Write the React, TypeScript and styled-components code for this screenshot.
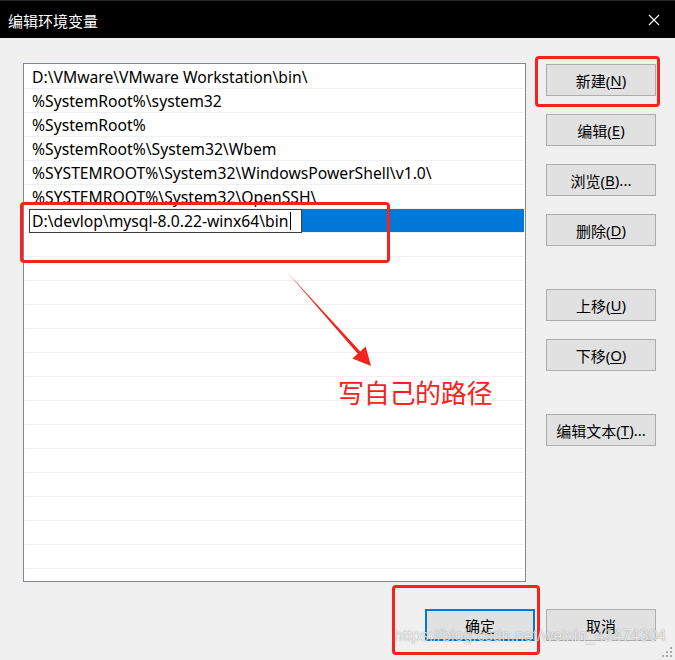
import styled, { createGlobalStyle } from "styled-components";

const GlobalStyle = createGlobalStyle`
  html, body {
    margin: 0;
    padding: 0;
    background: #f0f0f0;
  }
  * {
    box-sizing: border-box;
  }
`;

const UI_FONT = `"Noto Sans", "Noto Sans CJK SC", sans-serif`;
const RED = "#f5231c";

const Window = styled.div`
  position: relative;
  width: 675px;
  height: 660px;
  overflow: hidden;
  background: #f0f0f0;
  font-family: ${UI_FONT};
  font-size: 15px;
  color: #000;
`;

const TitleBar = styled.div`
  height: 38px;
  background: #000;
  border-top: 1px solid #262626;
  display: flex;
  align-items: center;
  justify-content: space-between;
  padding-left: 8px;
`;

const Title = styled.span`
  color: #fff;
  font-family: "Noto Sans CJK SC", sans-serif;
  font-size: 15px;
  line-height: 1;
  margin-top: 1px;
`;

const CloseButton = styled.div`
  width: 42px;
  height: 37px;
  display: flex;
  align-items: center;
  justify-content: center;
`;

const Body = styled.div`
  display: grid;
  grid-template-columns: 503px 110px;
  column-gap: 20px;
  padding: 25px 19px 0 23px;
`;

const List = styled.div`
  height: 519px;
  border: 1px solid #828790;
  background: #fff;
  padding: 1px 1px 0 1px;
  overflow: hidden;
  font-size: 15.7px;
`;

const Row = styled.div<{ $editing?: boolean }>`
  height: 24px;
  border-bottom: 1px solid #f0f0f0;
  display: flex;
  align-items: center;
  padding-left: ${(p) => (p.$editing ? "4px" : "7px")};
  white-space: nowrap;
  background: ${(p) =>
    p.$editing ? "linear-gradient(to right, #fff 4px, #0078d7 4px)" : "#fff"};
`;

const EditBox = styled.div`
  width: 273px;
  height: 24px;
  margin-bottom: -1px;
  border: 1px solid #3c3c3c;
  background: #fff;
  display: flex;
  align-items: center;
  padding-left: 2px;
`;

const Caret = styled.span`
  display: inline-block;
  width: 1px;
  height: 18px;
  background: #000;
  margin-left: 1px;
`;

const ButtonColumn = styled.div`
  display: flex;
  flex-direction: column;
  gap: 18px;
  padding-top: 1px;
`;

const Button = styled.div<{ $default?: boolean; $spaced?: boolean }>`
  width: 110px;
  height: 32px;
  background: #e1e1e1;
  border: ${(p) => (p.$default ? "2px solid #0078d7" : "1px solid #adadad")};
  display: flex;
  align-items: center;
  justify-content: center;
  font-family: ${UI_FONT};
  font-size: 15px;
  margin-top: ${(p) => (p.$spaced ? "25px" : "0")};
  white-space: nowrap;
`;

const Key = styled.u`
  text-decoration-thickness: 1px;
  text-underline-offset: 2px;
`;

const Footer = styled.div`
  grid-column: 1 / -1;
  display: flex;
  justify-content: flex-end;
  gap: 11px;
  margin-top: 27px;
`;

const RedBox = styled.div<{ $x: number; $y: number; $w: number; $h: number }>`
  position: absolute;
  left: ${(p) => p.$x}px;
  top: ${(p) => p.$y}px;
  width: ${(p) => p.$w}px;
  height: ${(p) => p.$h}px;
  border: 3px solid ${RED};
  border-radius: 4px;
  pointer-events: none;
`;

const ArrowLayer = styled.svg`
  position: absolute;
  left: 0;
  top: 0;
  pointer-events: none;
`;

const Note = styled.div`
  position: absolute;
  left: 338px;
  top: 379px;
  color: ${RED};
  font-family: "Noto Sans CJK SC", sans-serif;
  font-size: 26px;
  line-height: 1;
  letter-spacing: -0.3px;
`;

const Watermark = styled.div`
  position: absolute;
  left: 394px;
  top: 627px;
  font-family: "Liberation Sans", Arial, sans-serif;
  font-size: 16px;
  color: rgba(255, 255, 255, 0.75);
  text-shadow: 0 0 1px rgba(0, 0, 0, 0.3), 0 0 2px rgba(0, 0, 0, 0.12);
  white-space: nowrap;
`;

const Grip = styled.svg`
  position: absolute;
  right: 2px;
  bottom: 2px;
`;

const paths = [
  "D:\\VMware\\VMware Workstation\\bin\\",
  "%SystemRoot%\\system32",
  "%SystemRoot%",
  "%SystemRoot%\\System32\\Wbem",
  "%SYSTEMROOT%\\System32\\WindowsPowerShell\\v1.0\\",
  "%SYSTEMROOT%\\System32\\OpenSSH\\",
];

const EMPTY_ROWS = 16;

export default function App() {
  return (
    <>
      <GlobalStyle />
      <Window>
        <TitleBar>
          <Title>编辑环境变量</Title>
          <CloseButton>
            <svg width="12" height="12" viewBox="0 0 12 12">
              <path d="M1 1 L11 11 M11 1 L1 11" stroke="#fff" strokeWidth="1.1" />
            </svg>
          </CloseButton>
        </TitleBar>
        <Body>
          <List>
            {paths.map((p) => (
              <Row key={p}>{p}</Row>
            ))}
            <Row $editing>
              <EditBox>
                D:\devlop\mysql-8.0.22-winx64\bin
                <Caret />
              </EditBox>
            </Row>
            {Array.from({ length: EMPTY_ROWS }).map((_, i) => (
              <Row key={"e" + i} />
            ))}
          </List>
          <ButtonColumn>
            <Button>
              新建(<Key>N</Key>)
            </Button>
            <Button>
              编辑(<Key>E</Key>)
            </Button>
            <Button>
              浏览(<Key>B</Key>)...
            </Button>
            <Button>
              删除(<Key>D</Key>)
            </Button>
            <Button $spaced>
              上移(<Key>U</Key>)
            </Button>
            <Button>
              下移(<Key>O</Key>)
            </Button>
            <Button $spaced>
              编辑文本(<Key>T</Key>)...
            </Button>
          </ButtonColumn>
          <Footer>
            <Button $default>确定</Button>
            <Button>取消</Button>
          </Footer>
        </Body>

        <RedBox $x={535} $y={56} $w={125} $h={51} />
        <RedBox $x={20} $y={202} $w={370} $h={61} />
        <RedBox $x={392} $y={585} $w={148} $h={70} />
        <ArrowLayer width="675" height="660" viewBox="0 0 675 660">
          <polygon
            points="287,272 360.3,351.5 365.7,346.6 371,366 352.3,358.6 357.7,353.7"
            fill={RED}
          />
        </ArrowLayer>
        <Note>写自己的路径</Note>
        <Watermark>https://blog.csdn.net/weixin_42474304</Watermark>
        <Grip width="12" height="12" viewBox="0 0 12 12">
          <g fill="#a8a8a8">
            <rect x="9" y="1" width="2" height="2" />
            <rect x="9" y="5" width="2" height="2" />
            <rect x="5" y="5" width="2" height="2" />
            <rect x="9" y="9" width="2" height="2" />
            <rect x="5" y="9" width="2" height="2" />
            <rect x="1" y="9" width="2" height="2" />
          </g>
        </Grip>
      </Window>
    </>
  );
}
